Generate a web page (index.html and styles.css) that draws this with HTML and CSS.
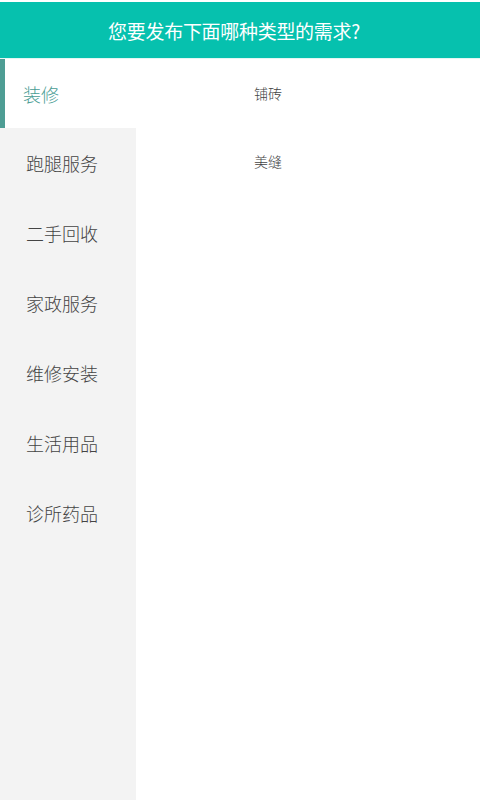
FILE: index.html
```html
<!DOCTYPE html>
<html lang="zh">
<head>
<meta charset="utf-8">
<link rel="stylesheet" href="styles.css">
</head>
<body>
<div class="page">
  <header class="header"><span class="title">您要发布下面哪种类型的需求?</span></header>
  <div class="main">
    <nav class="sidebar">
      <div class="cat active">装修</div>
      <div class="cat">跑腿服务</div>
      <div class="cat">二手回收</div>
      <div class="cat">家政服务</div>
      <div class="cat">维修安装</div>
      <div class="cat">生活用品</div>
      <div class="cat">诊所药品</div>
    </nav>
    <section class="content">
      <div class="sub">铺砖</div>
      <div class="sub">美缝</div>
    </section>
  </div>
</div>
</body>
</html>
```
FILE: styles.css
```css
html, body {
  margin: 0;
  padding: 0;
  height: 100%;
  background: #fff;
}
body {
  font-family: "Noto Sans CJK SC", "Noto Sans", sans-serif;
}
.page {
  display: flex;
  flex-direction: column;
  height: 800px;
  padding-top: 2px;
  box-sizing: border-box;
}
.header {
  height: 56px;
  background: #06c1ae;
  color: #fff;
  display: flex;
  align-items: center;
  justify-content: center;
  padding-right: 12px;
  border-bottom: 1px solid #e3f6f3;
  flex-shrink: 0;
}
.title {
  font-size: 19px;
  letter-spacing: -0.3px;
}
.main {
  flex: 1;
  display: flex;
}
.sidebar {
  width: 136px;
  background: #f3f3f3;
  flex-shrink: 0;
}
.cat {
  height: 70px;
  display: flex;
  align-items: center;
  padding-left: 26px;
  font-size: 18px;
  font-weight: 300;
  color: #444;
}
.cat.active {
  background: #fff;
  color: #4a9d94;
  border-left: 5px solid #4e9d94;
  padding-left: 18px;
  height: 69px;
}
.content {
  flex: 1;
  padding-left: 118px;
}
.sub {
  height: 68px;
  display: flex;
  align-items: center;
  font-size: 14px;
  font-weight: 300;
  color: #444;
}
```
